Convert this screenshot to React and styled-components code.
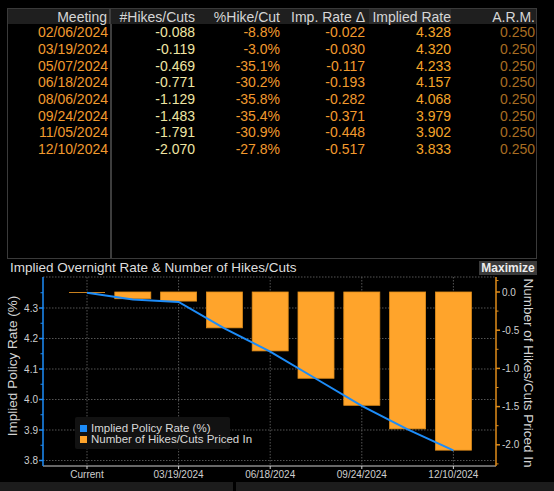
import React from "react";
import styled, { createGlobalStyle } from "styled-components";

const meetings = [
  { date: "02/06/2024", hikes: "-0.088", pct: "-8.8%", delta: "-0.022", rate: "4.328", arm: "0.250" },
  { date: "03/19/2024", hikes: "-0.119", pct: "-3.0%", delta: "-0.030", rate: "4.320", arm: "0.250" },
  { date: "05/07/2024", hikes: "-0.469", pct: "-35.1%", delta: "-0.117", rate: "4.233", arm: "0.250" },
  { date: "06/18/2024", hikes: "-0.771", pct: "-30.2%", delta: "-0.193", rate: "4.157", arm: "0.250" },
  { date: "08/06/2024", hikes: "-1.129", pct: "-35.8%", delta: "-0.282", rate: "4.068", arm: "0.250" },
  { date: "09/24/2024", hikes: "-1.483", pct: "-35.4%", delta: "-0.371", rate: "3.979", arm: "0.250" },
  { date: "11/05/2024", hikes: "-1.791", pct: "-30.9%", delta: "-0.448", rate: "3.902", arm: "0.250" },
  { date: "12/10/2024", hikes: "-2.070", pct: "-27.8%", delta: "-0.517", rate: "3.833", arm: "0.250" },
];

const GlobalStyle = createGlobalStyle`
  html, body {
    margin: 0;
    padding: 0;
    background: #000;
  }
  body {
    font-family: "Liberation Sans", Arial, sans-serif;
  }
`;

const Screen = styled.div`
  width: 554px;
  height: 491px;
  overflow: hidden;
  background: #000;
  display: flex;
  flex-direction: column;
`;

const TablePanel = styled.div`
  box-sizing: border-box;
  margin: 8px 0 0 7px;
  width: 530px;
  height: 251px;
  border: 1px solid #3a3a3a;
  background: linear-gradient(
    to right,
    transparent 102px,
    #3d3d3d 102px,
    #3d3d3d 104px,
    transparent 104px
  );
`;

const Row = styled.div`
  display: grid;
  grid-template-columns: 103px 84px 85px 85px 86px 84px;
  height: ${(p) => (p.$head ? "15px" : "16.7px")};
  align-items: center;
  background: ${(p) => (p.$head ? "#1f1f1f" : "transparent")};
  font-size: 14px;
  line-height: 1;
  white-space: nowrap;
`;

const HeadCell = styled.div`
  text-align: right;
  color: #d6d6d6;
  padding-right: ${(p) => (p.$first ? "2px" : "0")};
  height: 100%;
  display: flex;
  align-items: center;
  justify-content: flex-end;
  box-sizing: border-box;
  border-right: ${(p) => (p.$first ? "2px solid #3d3d3d" : "none")};
`;

const SortLabel = styled.span`
  background: ${(p) => (p.$active ? "#2c2c2c" : "transparent")};
  height: 100%;
  display: flex;
  align-items: center;
  padding-left: ${(p) => (p.$active ? "3px" : "0")};
`;

const Cell = styled.div`
  text-align: right;
  color: ${(p) => p.$color};
  padding-right: ${(p) => (p.$first ? "3px" : "0")};
`;

const ChartHeader = styled.div`
  display: flex;
  align-items: center;
  justify-content: space-between;
  height: 17px;
  padding: 0 17px 0 10px;
`;

const ChartTitle = styled.span`
  color: #dedede;
  font-size: 13.5px;
  white-space: nowrap;
`;

const MaxButton = styled.button`
  all: unset;
  background: #3a3a3a;
  color: #ececec;
  font-family: "Liberation Sans", Arial, sans-serif;
  font-size: 12px;
  font-weight: bold;
  height: 14px;
  width: 58px;
  text-align: center;
  line-height: 14px;
`;

const ChartSvg = styled.svg`
  display: block;
  width: 554px;
  height: 206px;
  font-family: "Liberation Sans", Arial, sans-serif;
`;

const Footer = styled.div`
  display: flex;
  gap: 3px;
  height: 9px;
`;

const FooterBar = styled.div`
  background: #1c1c1c;
  flex: ${(p) => (p.$grow ? 1 : "0 0 233px")};
`;

const L = 43;
const R = 496;
const T = 277;
const B = 466;
const yRate = (r) => 308 - (r - 4.3) * 305;
const yHikes = (v) => 292 - v * 76.4;
const barX = (i) => 87 + i * 45.8;

const hikes = [0, -0.088, -0.119, -0.469, -0.771, -1.129, -1.483, -1.791, -2.07];
const rates = [4.35, 4.328, 4.32, 4.233, 4.157, 4.068, 3.979, 3.902, 3.833];
const xLabels = ["Current", "03/19/2024", "06/18/2024", "09/24/2024", "12/10/2024"];

function Chart() {
  const leftMajors = [4.3, 4.2, 4.1, 4.0, 3.9, 3.8];
  const leftMinors = [4.35, 4.25, 4.15, 4.05, 3.95, 3.85];
  const rightMajors = [0, -0.5, -1, -1.5, -2];
  const rightMinors = [0.15, -0.25, -0.75, -1.25, -1.75, -2.25];
  const linePts = rates.map((r, i) => `${barX(i)},${yRate(r)}`).join(" ");

  return (
    <ChartSvg viewBox="0 276 554 206">
      {/* grid */}
      <line x1={L} y1={T} x2={R} y2={T} stroke="#555" strokeDasharray="1.5 1.5" />
      {leftMajors.map((v) => (
        <line key={v} x1={L} y1={yRate(v)} x2={R} y2={yRate(v)} stroke="#555" strokeDasharray="1.5 1.5" />
      ))}
      {[0, 2, 4, 6, 8].map((i) => (
        <line key={i} x1={barX(i)} y1={T} x2={barX(i)} y2={B} stroke="#555" strokeDasharray="1.5 1.5" />
      ))}

      {/* bars */}
      {hikes.map((v, i) => {
        const h = Math.max(1, yHikes(v) - yHikes(0));
        return (
          <rect
            key={i}
            x={barX(i) - 18}
            y={yHikes(0)}
            width={36}
            height={h}
            fill={i === 0 ? "#c8801e" : "#ffa42b"}
            stroke={i === 0 ? "none" : "#e08d1a"}
            strokeWidth="0.8"
          />
        );
      })}

      {/* rate line */}
      <polyline points={linePts} fill="none" stroke="#1d8cf8" strokeWidth="2" />

      {/* x axis */}
      <line x1={L} y1={B} x2={R} y2={B} stroke="#cfcfcf" strokeWidth="1" />
      {[0, 2, 4, 6, 8].map((i, k) => (
        <g key={i}>
          <line x1={barX(i)} y1={B} x2={barX(i)} y2={B + 3} stroke="#cfcfcf" />
          <text x={barX(i)} y={477.5} fill="#cfcfcf" fontSize="10" textAnchor="middle">
            {xLabels[k]}
          </text>
        </g>
      ))}

      {/* left axis */}
      <line x1={L} y1={T} x2={L} y2={B} stroke="#1d8cf8" strokeWidth="1.5" />
      {leftMajors.map((v) => (
        <g key={v}>
          <line x1={L - 4} y1={yRate(v)} x2={L} y2={yRate(v)} stroke="#1d8cf8" strokeWidth="1.5" />
          <text x={L - 5} y={yRate(v) + 3.5} fill="#cfcfcf" fontSize="10" textAnchor="end">
            {v.toFixed(1)}
          </text>
        </g>
      ))}
      {leftMinors.map((v) => (
        <line key={v} x1={L - 2.5} y1={yRate(v)} x2={L} y2={yRate(v)} stroke="#1d8cf8" />
      ))}
      <text
        transform="translate(17 366) rotate(-90)"
        fill="#d4d4d4"
        fontSize="13.5"
        textAnchor="middle"
      >
        Implied Policy Rate (%)
      </text>

      {/* right axis */}
      <line x1={R} y1={T} x2={R} y2={B} stroke="#e08d1a" strokeWidth="1.5" />
      {rightMajors.map((v) => (
        <g key={v}>
          <line x1={R} y1={yHikes(v)} x2={R + 4} y2={yHikes(v)} stroke="#e08d1a" strokeWidth="1.5" />
          <text x={R + 6} y={yHikes(v) + 3.5} fill="#cfcfcf" fontSize="10">
            {v.toFixed(1)}
          </text>
        </g>
      ))}
      {rightMinors.map((v) => (
        <line key={v} x1={R} y1={yHikes(v)} x2={R + 2.5} y2={yHikes(v)} stroke="#e08d1a" />
      ))}
      <text
        transform="translate(524 373) rotate(90)"
        fill="#d4d4d4"
        fontSize="13.5"
        textAnchor="middle"
      >
        Number of Hikes/Cuts Priced In
      </text>

      {/* legend */}
      <rect x={75} y={417} width={155} height={32} rx={2} fill="#121212" />
      <rect x={80} y={425} width={7} height={7} fill="#1d8cf8" />
      <text x={91} y={432} fill="#d8d8d8" fontSize="11.5">
        Implied Policy Rate (%)
      </text>
      <rect x={80} y={436} width={7} height={7} fill="#ffa42b" />
      <text x={91} y={443} fill="#d8d8d8" fontSize="11.5">
        Number of Hikes/Cuts Priced In
      </text>
    </ChartSvg>
  );
}

export default function App() {
  return (
    <>
      <GlobalStyle />
      <Screen>
        <TablePanel>
          <Row $head>
            <HeadCell $first>Meeting</HeadCell>
            <HeadCell>#Hikes/Cuts</HeadCell>
            <HeadCell>%Hike/Cut</HeadCell>
            <HeadCell>Imp. Rate Δ</HeadCell>
            <HeadCell>
              <SortLabel $active>Implied Rate</SortLabel>
            </HeadCell>
            <HeadCell>A.R.M.</HeadCell>
          </Row>
          {meetings.map((m) => (
            <Row key={m.date}>
              <Cell $first $color="#f29a2e">{m.date}</Cell>
              <Cell $color="#efe6a4">{m.hikes}</Cell>
              <Cell $color="#f29a2e">{m.pct}</Cell>
              <Cell $color="#f29a2e">{m.delta}</Cell>
              <Cell $color="#f5a52a">{m.rate}</Cell>
              <Cell $color="#a86d22">{m.arm}</Cell>
            </Row>
          ))}
        </TablePanel>
        <ChartHeader>
          <ChartTitle>Implied Overnight Rate &amp; Number of Hikes/Cuts</ChartTitle>
          <MaxButton>Maximize</MaxButton>
        </ChartHeader>
        <Chart />
        <Footer>
          <FooterBar />
          <FooterBar $grow />
        </Footer>
      </Screen>
    </>
  );
}
